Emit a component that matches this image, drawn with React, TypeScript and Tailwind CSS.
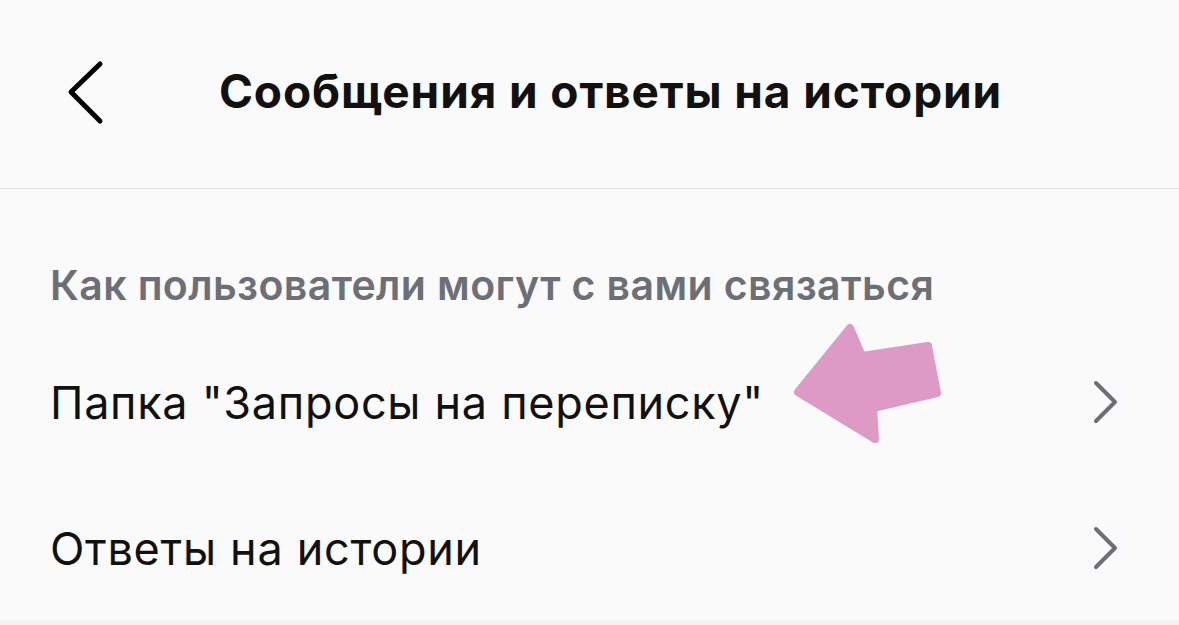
const font = { fontFamily: 'Inter, "Noto Sans", sans-serif' }

const Chevron = () => (
  <svg width="30" height="46" viewBox="0 0 30 46" className="shrink-0">
    <polyline
      points="5,4 24,23 5,42"
      fill="none"
      stroke="#6b6e74"
      strokeWidth="4"
      strokeLinecap="round"
      strokeLinejoin="round"
    />
  </svg>
)

const Row = ({ label }: { label: string }) => (
  <div className="flex items-center justify-between h-[146px] pl-[50px] pr-[58px]">
    <span className="text-[45px] text-[#111] tracking-[0.7px] leading-none">{label}</span>
    <Chevron />
  </div>
)

export default function App() {
  return (
    <div className="relative w-[1179px] h-[625px] bg-[#fafafa] overflow-hidden" style={font}>
      {/* Header */}
      <div className="relative flex items-center justify-center h-[189px] border-b border-[#e4e4e4] pb-[6px] pl-[42px]">
        <svg width="44" height="70" viewBox="0 0 44 70" className="absolute left-[64px] top-[58px]">
          <polyline
            points="36,6 7,34 36,63"
            fill="none"
            stroke="#000"
            strokeWidth="5"
            strokeLinecap="round"
            strokeLinejoin="round"
          />
        </svg>
        <h1 className="text-[46px] font-bold text-[#111] tracking-[0.9px] leading-none">
          Сообщения и ответы на истории
        </h1>
      </div>

      <div className="pt-[72px]">
        <div className="pl-[50px] text-[41px] font-semibold text-[#6c6f76] tracking-[0.4px] leading-[48px]">
          Как пользователи могут с вами связаться
        </div>
        <div className="mt-[20px]">
          <Row label={'Папка "Запросы на переписку"'} />
          <Row label="Ответы на истории" />
        </div>
      </div>

      <div className="absolute left-0 right-0 bottom-0 h-[5px] bg-[#f2f2f2]" />

      {/* Pink arrow annotation */}
      <svg className="absolute left-0 top-0" width="1179" height="625">
        <polygon
          points="798,392 850,328 862,356 928,346 937,393 873,408 875,439"
          fill="#dc9ac5"
          stroke="#dc9ac5"
          strokeWidth="8"
          strokeLinejoin="round"
        />
      </svg>
    </div>
  )
}
